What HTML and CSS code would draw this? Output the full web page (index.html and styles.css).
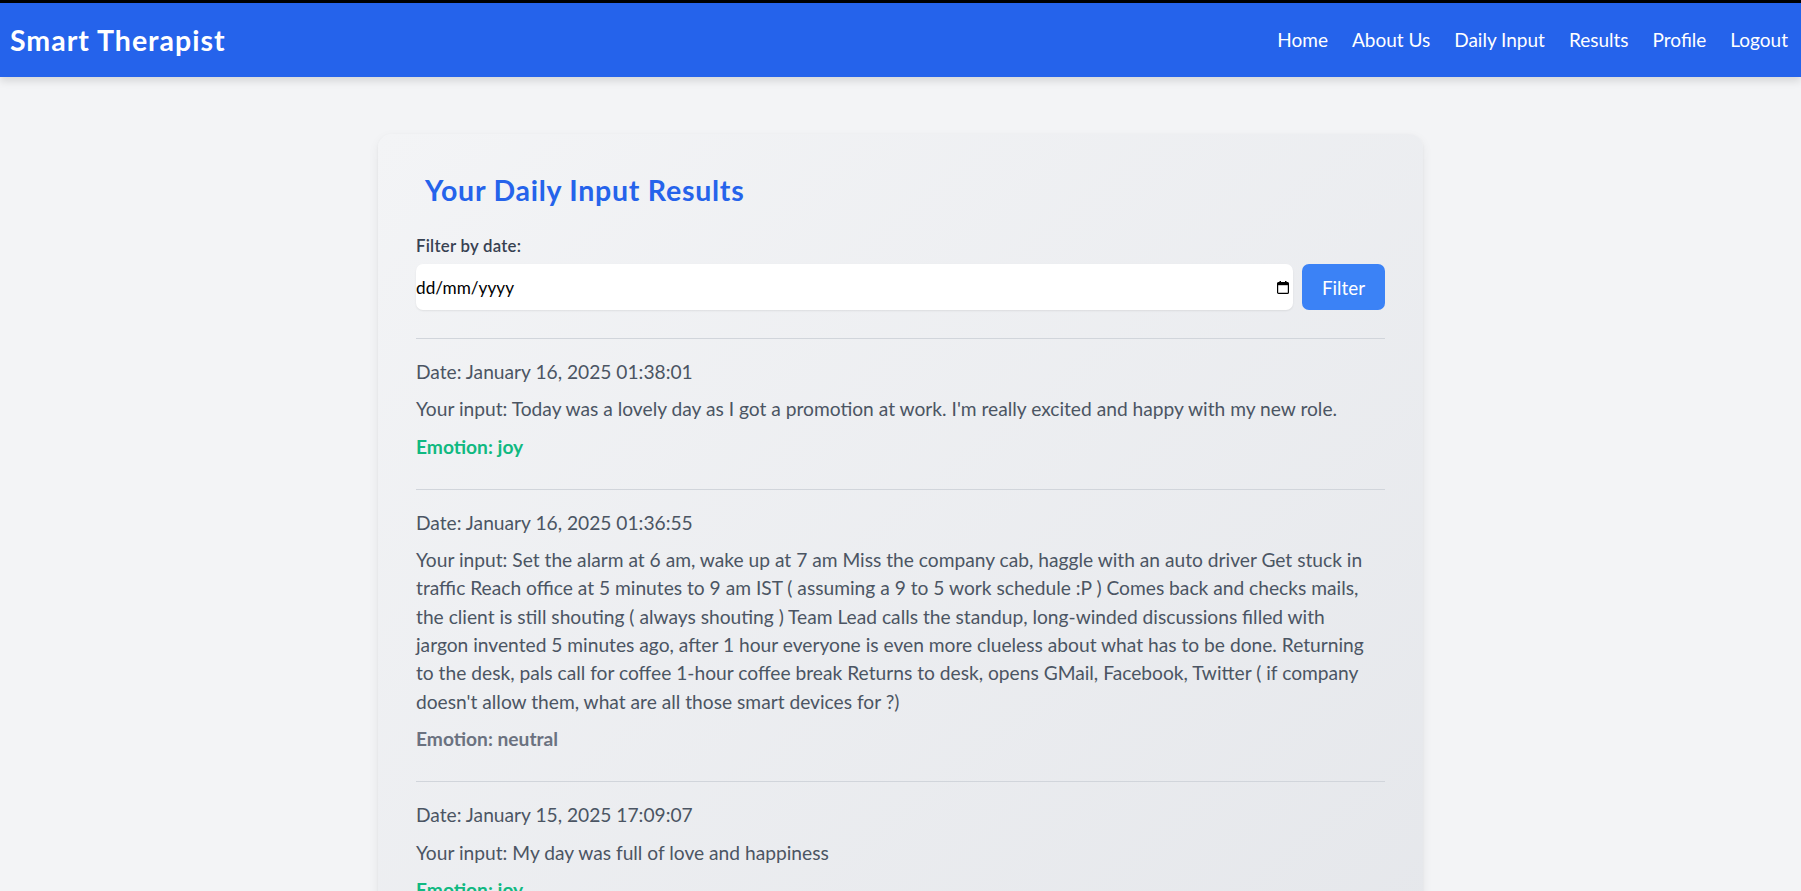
FILE: index.html
```html
<!DOCTYPE html>
<html lang="en">
<head>
<meta charset="utf-8">
<title>Smart Therapist - Results</title>
<link rel="stylesheet" href="styles.css">
</head>
<body>
<header class="navbar">
  <div class="brand">Smart Therapist</div>
  <nav class="nav-links">
    <a href="#">Home</a>
    <a href="#">About Us</a>
    <a href="#">Daily Input</a>
    <a href="#">Results</a>
    <a href="#">Profile</a>
    <a href="#">Logout</a>
  </nav>
</header>

<main class="page">
  <section class="card">
    <h1 class="card-title">Your Daily Input Results</h1>

    <form class="filter-form">
      <label class="filter-label">Filter by date:</label>
      <div class="filter-row">
        <div class="date-input">
          <span class="date-text">dd/mm/yyyy</span>
          <svg class="cal-icon" width="12" height="13" viewBox="0 0 12 13" aria-hidden="true">
            <rect x="2.5" y="0" width="1.5" height="2" fill="#000"/>
            <rect x="8" y="0" width="1.5" height="2" fill="#000"/>
            <rect x="0.6" y="1.6" width="10.8" height="10.8" rx="1" fill="none" stroke="#000" stroke-width="1.2"/>
            <rect x="0.6" y="1.6" width="10.8" height="2.6" fill="#000"/>
          </svg>
        </div>
        <button type="button" class="filter-btn">Filter</button>
      </div>
    </form>

    <div class="entry">
      <p class="entry-line">Date: January 16, 2025 01:38:01</p>
      <p class="entry-line">Your input: Today was a lovely day as I got a promotion at work. I'm really excited and happy with my new role.</p>
      <p class="emotion emotion-joy">Emotion: joy</p>
    </div>

    <div class="entry">
      <p class="entry-line">Date: January 16, 2025 01:36:55</p>
      <p class="entry-line">Your input: Set the alarm at 6 am, wake up at 7 am Miss the company cab, haggle with an auto driver Get stuck in traffic Reach office at 5 minutes to 9 am IST ( assuming a 9 to 5 work schedule :P ) Comes back and checks mails, the client is still shouting ( always shouting ) Team Lead calls the standup, long-winded discussions filled with<br>jargon invented 5 minutes ago, after 1 hour everyone is even more clueless about what has to be done. Returning<br>to the desk, pals call for coffee 1-hour coffee break Returns to desk, opens GMail, Facebook, Twitter ( if company<br>doesn't allow them, what are all those smart devices for ?)</p>
      <p class="emotion emotion-neutral">Emotion: neutral</p>
    </div>

    <div class="entry">
      <p class="entry-line">Date: January 15, 2025 17:09:07</p>
      <p class="entry-line">Your input: My day was full of love and happiness</p>
      <p class="emotion emotion-joy">Emotion: joy</p>
    </div>
  </section>
</main>
</body>
</html>
```
FILE: styles.css
```css
* { box-sizing: border-box; }

html, body {
  margin: 0;
  padding: 0;
}

body {
  background: #f3f4f6;
  font-family: Lato, "Noto Sans", "Liberation Sans", sans-serif;
  color: #4b5563;
  border-top: 3px solid #000;
}

.navbar {
  height: 74px;
  background: #2563eb;
  display: flex;
  align-items: center;
  justify-content: space-between;
  padding: 0 13px 0 10px;
  box-shadow: 0 4px 8px rgba(0, 0, 0, 0.12);
  position: relative;
}

.brand {
  color: #fff;
  font-weight: 700;
  font-size: 28.5px;
  letter-spacing: 1px;
  line-height: 36px;
}

.nav-links {
  display: flex;
  gap: 24px;
}

.nav-links a {
  color: #fff;
  text-decoration: none;
  font-size: 19px;
  line-height: 28px;
}

.page {
  padding-top: 57px;
}

.card {
  width: 1045px;
  margin: 0 auto;
  background: linear-gradient(to bottom right, #f3f4f6, #e5e7eb);
  border-radius: 14px;
  box-shadow: 0 4px 12px rgba(0, 0, 0, 0.06), 0 1px 3px rgba(0, 0, 0, 0.05);
  padding: 38px 38px 40px;
}

.card-title {
  margin: 0 0 26px;
  padding-left: 9px;
  color: #2563eb;
  font-size: 28.5px;
  letter-spacing: 0.75px;
  line-height: 36px;
  font-weight: 700;
}

.filter-form {
  margin: 0 0 28px;
}

.filter-label {
  display: block;
  font-size: 16.8px;
  letter-spacing: 0.25px;
  line-height: 23px;
  font-weight: 600;
  color: #374151;
  margin-bottom: 7px;
}

.filter-row {
  display: flex;
  gap: 9px;
}

.date-input {
  flex: 1;
  height: 46px;
  background: #fff;
  border-radius: 7px;
  box-shadow: 0 1px 2px rgba(0, 0, 0, 0.08);
  display: flex;
  align-items: center;
  justify-content: space-between;
  padding: 0 4px 0 0;
}

.date-text {
  color: #000;
  font-size: 17.2px;
}

.cal-icon {
  display: block;
  margin-top: 1px;
}

.filter-btn {
  width: 83px;
  height: 46px;
  border: none;
  border-radius: 7px;
  background: #3b82f6;
  color: #fff;
  font-family: inherit;
  font-size: 18.8px;
  cursor: pointer;
}

.entry {
  border-top: 1px solid #d1d5db;
  padding: 19px 0 28px;
}

.entry p {
  margin: 0 0 9px;
  font-size: 19.2px;
  line-height: 28.3px;
}

.entry p:last-child {
  margin-bottom: 0;
}

.emotion {
  font-weight: 700;
}

.emotion-joy { color: #10b981; }
.emotion-neutral { color: #6b7280; }
```
